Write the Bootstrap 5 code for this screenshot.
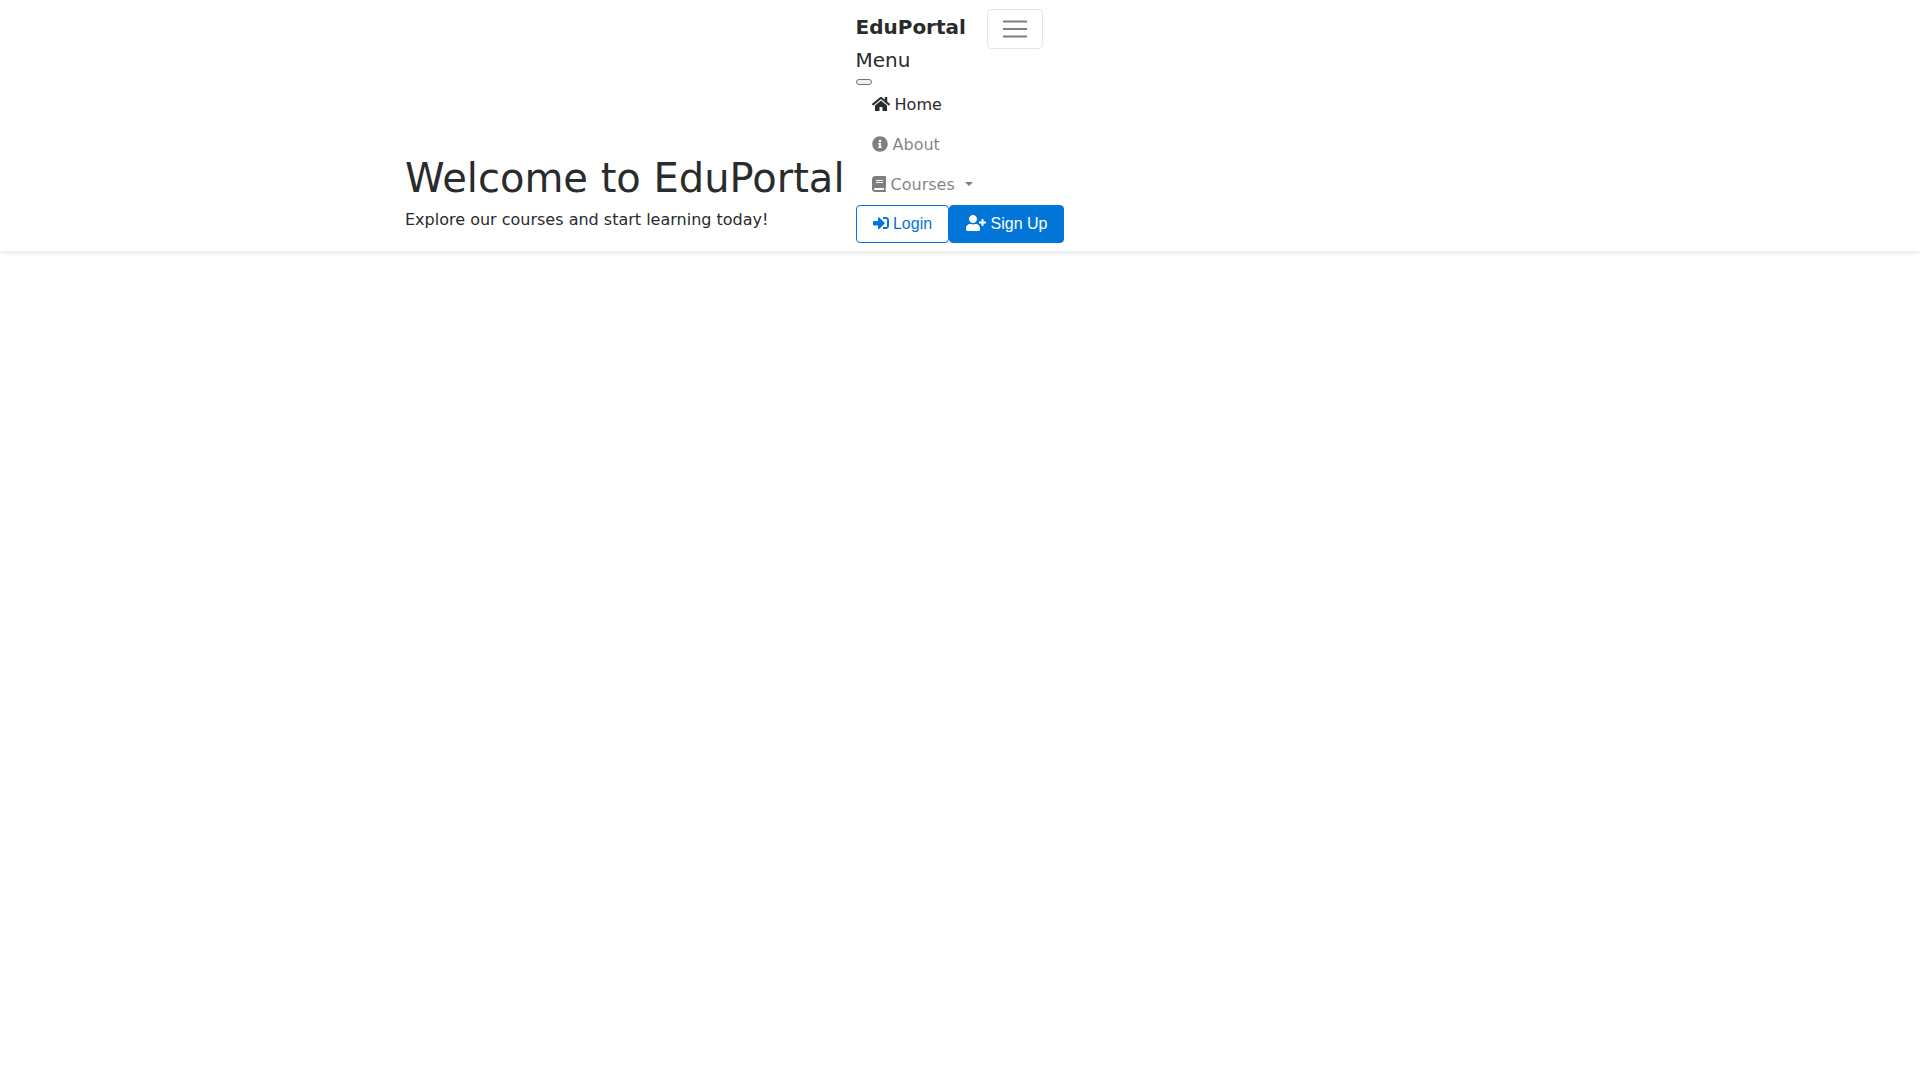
<!DOCTYPE html>
<html lang="en">
<head>
<meta charset="utf-8">
<meta name="viewport" content="width=device-width, initial-scale=1">
<title>EduPortal</title>
<link href="https://cdn.jsdelivr.net/npm/bootstrap@5.3.0/dist/css/bootstrap.min.css" rel="stylesheet">
<style>
  body { font-family: "DejaVu Sans", sans-serif; color: #292b2c; background: #fff; }
  .site-header { padding: 9px 0 8px; box-shadow: 0 2px 4px rgba(0, 0, 0, .1); }
  .site-wrap { max-width: 1140px; padding: 0 15px; column-gap: 11px; }
  .welcome { margin-bottom: 11px; }
  .welcome h1 { font-size: 40px; line-height: 44px; font-weight: 400; }
  .site-brand { font-size: 20px; line-height: 36px; font-weight: 700; color: #292b2c; }
  .brand-row { column-gap: 21px; }
  .menu-toggle { width: 56px; height: 40px; padding: 0; border: 1px solid rgba(0, 0, 0, .1); border-radius: 4px; background: none; }
  .menu-title { font-size: 20px; line-height: 23px; font-weight: 400; margin-bottom: 7px; }
  .menu-close { display: block; width: 16px; height: 6px; padding: 0; border: 1px solid #767676; border-radius: 3px; background: #efefef; }
  .site-nav .nav-link { padding: 8px 16px; color: rgba(0, 0, 0, .5); }
  .site-nav .nav-link.active { color: #292b2c; }
  .site-nav .dropdown-toggle::after { margin-left: 5px; }
  .glyph { height: 16px; fill: currentColor; vertical-align: -2px; }
  .site-btn { --bs-btn-padding-x: 16px; --bs-btn-border-radius: 4px; font-family: "Liberation Sans", sans-serif;
    --bs-btn-border-color: #0275d8; --bs-btn-color: #0275d8; --bs-btn-hover-bg: #0275d8; --bs-btn-hover-color: #fff; }
  .site-btn-fill { --bs-btn-bg: #0275d8; --bs-btn-color: #fff; }
</style>
</head>
<body class="min-vh-100">
<header class="site-header">
  <div class="container site-wrap d-flex flex-wrap align-items-end">
    <div class="welcome">
      <h1 class="mb-2">Welcome to EduPortal</h1>
      <p class="mb-0">Explore our courses and start learning today!</p>
    </div>
    <nav aria-label="Main">
      <div class="brand-row d-flex align-items-start">
        <a class="site-brand text-decoration-none" href="#">EduPortal</a>
        <button class="menu-toggle d-flex align-items-center justify-content-center" type="button" aria-label="Toggle navigation">
          <svg width="30" height="30" viewBox="0 0 30 30" aria-hidden="true"><path stroke="rgba(0,0,0,.5)" stroke-width="2" stroke-linecap="butt" d="M3 7.5h24M3 15h24M3 22.5h24"/></svg>
        </button>
      </div>
      <h5 class="menu-title">Menu</h5>
      <button class="menu-close" type="button" aria-label="Close"></button>
      <ul class="site-nav nav flex-column">
        <li class="nav-item"><a class="nav-link active" href="#"><svg class="glyph" width="18" viewBox="0 0 576 512" aria-hidden="true"><path d="M280.37 148.26L96 300.11V464a16 16 0 0 0 16 16l112.06-.29a16 16 0 0 0 15.92-16V368a16 16 0 0 1 16-16h64a16 16 0 0 1 16 16v95.64a16 16 0 0 0 16 16.05L464 480a16 16 0 0 0 16-16V300L295.67 148.26a12.19 12.19 0 0 0-15.3 0zM571.6 251.47L488 182.56V44.05a12 12 0 0 0-12-12h-56a12 12 0 0 0-12 12v72.61L318.47 43a48 48 0 0 0-61 0L4.34 251.47a12 12 0 0 0-1.6 16.9l25.5 31A12 12 0 0 0 45.15 301l235.22-193.74a12.19 12.19 0 0 1 15.3 0L530.9 301a12 12 0 0 0 16.9-1.6l25.5-31a12 12 0 0 0-1.7-16.93z"/></svg> Home</a></li>
        <li class="nav-item"><a class="nav-link" href="#"><svg class="glyph" width="16" viewBox="0 0 512 512" aria-hidden="true"><path d="M256 8C119.043 8 8 119.083 8 256c0 136.997 111.043 248 248 248s248-111.003 248-248C504 119.083 392.957 8 256 8zm0 110c23.196 0 42 18.804 42 42s-18.804 42-42 42-42-18.804-42-42 18.804-42 42-42zm56 254c0 6.627-5.373 12-12 12h-88c-6.627 0-12-5.373-12-12v-24c0-6.627 5.373-12 12-12h12v-64h-12c-6.627 0-12-5.373-12-12v-24c0-6.627 5.373-12 12-12h64c6.627 0 12 5.373 12 12v100h12c6.627 0 12 5.373 12 12v24z"/></svg> About</a></li>
        <li class="nav-item dropdown"><a class="nav-link dropdown-toggle" href="#" role="button" aria-expanded="false"><svg class="glyph" width="14" viewBox="0 0 448 512" aria-hidden="true"><path d="M448 360V24c0-13.3-10.7-24-24-24H96C43 0 0 43 0 96v320c0 53 43 96 96 96h328c13.3 0 24-10.7 24-24v-16c0-7.5-3.5-14.3-8.9-18.7-4.2-15.4-4.2-59.3 0-74.7 5.4-4.3 8.9-11.1 8.9-18.6zM128 134c0-3.3 2.7-6 6-6h212c3.3 0 6 2.7 6 6v20c0 3.3-2.7 6-6 6H134c-3.3 0-6-2.7-6-6v-20zm0 64c0-3.3 2.7-6 6-6h212c3.3 0 6 2.7 6 6v20c0 3.3-2.7 6-6 6H134c-3.3 0-6-2.7-6-6v-20zm253.4 250H96c-17.7 0-32-14.3-32-32 0-17.6 14.4-32 32-32h285.4c-1.9 17.1-1.9 46.9 0 64z"/></svg> Courses </a></li>
      </ul>
      <div class="d-flex">
        <button class="btn site-btn" type="button"><svg class="glyph" width="16" viewBox="0 0 512 512" aria-hidden="true"><path d="M416 448h-84c-6.6 0-12-5.4-12-12v-40c0-6.6 5.4-12 12-12h84c17.7 0 32-14.3 32-32V160c0-17.7-14.3-32-32-32h-84c-6.6 0-12-5.4-12-12V76c0-6.6 5.4-12 12-12h84c53 0 96 43 96 96v192c0 53-43 96-96 96zm-47-201L201 79c-15-15-41-4.5-41 17v96H24c-13.3 0-24 10.7-24 24v96c0 13.3 10.7 24 24 24h136v96c0 21.5 26 32 41 17l168-168c9.3-9.4 9.3-24.6 0-34z"/></svg> Login</button>
        <button class="btn site-btn site-btn-fill" type="button"><svg class="glyph" width="20" viewBox="0 0 640 512" aria-hidden="true"><path d="M624 208h-64v-64c0-8.8-7.2-16-16-16h-32c-8.8 0-16 7.2-16 16v64h-64c-8.8 0-16 7.2-16 16v32c0 8.8 7.2 16 16 16h64v64c0 8.8 7.2 16 16 16h32c8.8 0 16-7.2 16-16v-64h64c8.8 0 16-7.2 16-16v-32c0-8.8-7.2-16-16-16zm-400 48c70.7 0 128-57.3 128-128S294.7 0 224 0 96 57.3 96 128s57.3 128 128 128zm89.6 32h-16.7c-22.2 10.2-46.9 16-72.9 16s-50.6-5.8-72.9-16h-16.7C60.2 288 0 348.2 0 422.4V464c0 26.5 21.5 48 48 48h352c26.5 0 48-21.5 48-48v-41.6c0-74.2-60.2-134.4-134.4-134.4z"/></svg> Sign Up</button>
      </div>
    </nav>
  </div>
</header>
<script src="https://cdn.jsdelivr.net/npm/bootstrap@5.3.0/dist/js/bootstrap.bundle.min.js"></script>
</body>
</html>
